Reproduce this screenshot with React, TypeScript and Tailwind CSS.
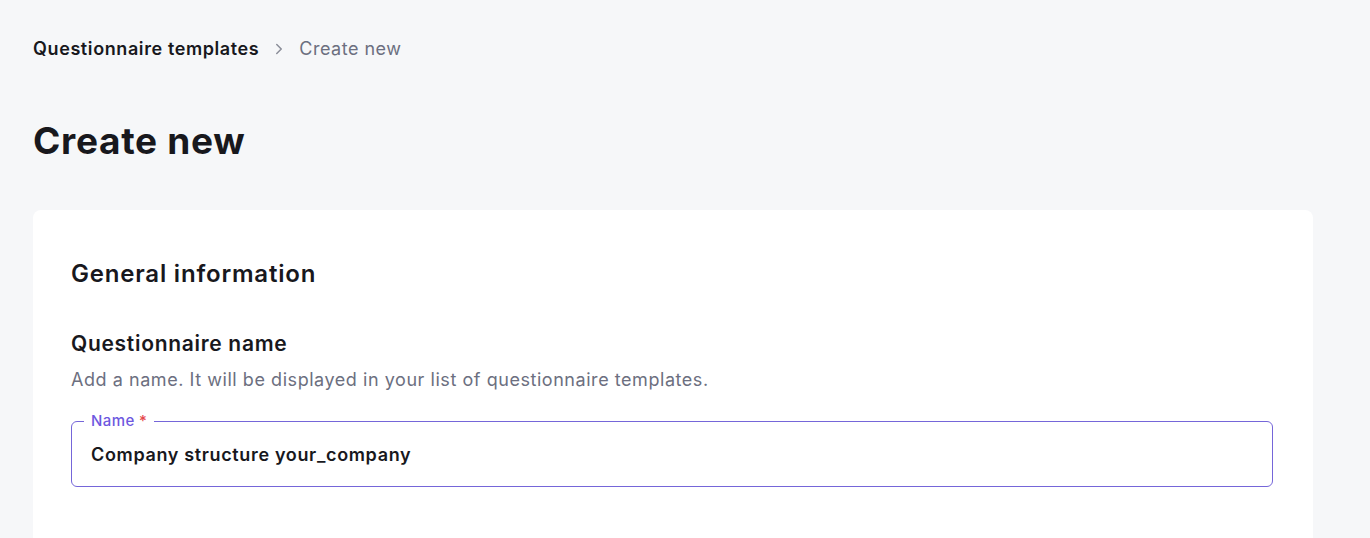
import { ChevronRight } from "lucide-react";

export default function App() {
  return (
    <div className="min-h-screen bg-[#f6f7f9] px-[33px] pt-[37px] font-['Inter',sans-serif] text-[#18181d]">
      <nav className="flex items-center text-[18px] leading-6">
        <span className="font-semibold tracking-[0.6px]">Questionnaire templates</span>
        <ChevronRight className="mx-[11px] h-[18px] w-[18px] text-[#8b8e99]" strokeWidth={2} />
        <span className="tracking-[0.5px] text-[#6c6f80]">Create new</span>
      </nav>

      <h1 className="mt-[58px] text-[37px] font-bold leading-[44px] tracking-[0.7px]">Create new</h1>

      <div className="mt-[47px] w-[1280px] rounded-lg bg-white pl-[38px] pr-[40px] pt-[48px] pb-[60px]">
        <h2 className="text-[24px] font-semibold leading-8 tracking-[0.8px]">General information</h2>

        <h3 className="mt-[40px] text-[21px] font-semibold leading-7 tracking-[0.7px]">Questionnaire name</h3>
        <p className="mt-[9px] text-[18px] leading-[26px] tracking-[0.55px] text-[#6c6f80]">
          Add a name. It will be displayed in your list of questionnaire templates.
        </p>

        <div className="relative mt-[28px] flex h-[66px] items-center rounded-md border border-[#7566d9] px-[19px]">
          <span className="absolute -top-[11px] left-[12px] bg-white px-[7px] text-[15px] font-medium leading-5 tracking-[0.4px] text-[#6e58e0]">
            Name <span className="text-[#e5484d]">*</span>
          </span>
          <span className="text-[18px] font-semibold tracking-[0.65px]">Company structure your_company</span>
        </div>
      </div>
    </div>
  );
}
